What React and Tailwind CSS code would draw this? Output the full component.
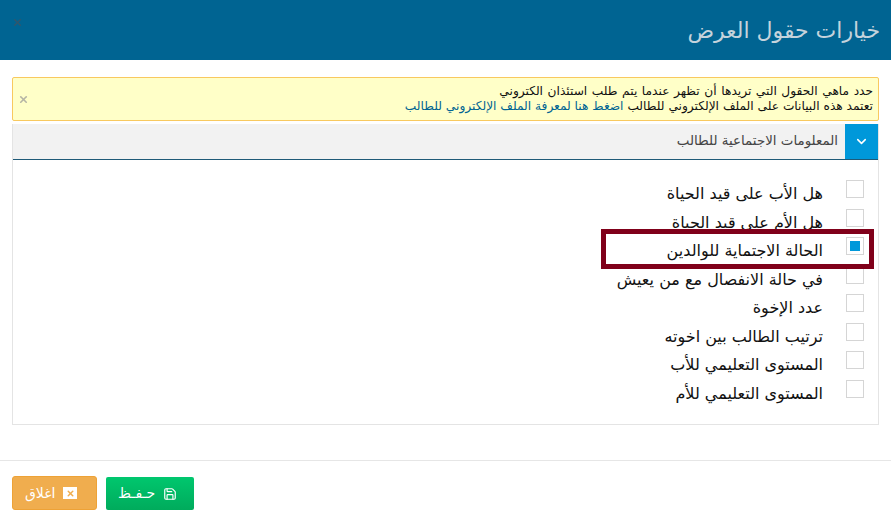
import { ChevronDown, Save, X } from "lucide-react";

const FIELDS = [
  "هل الأب على قيد الحياة",
  "هل الأم على قيد الحياة",
  "الحالة الاجتماية للوالدين",
  "في حالة الانفصال مع من يعيش",
  "عدد الإخوة",
  "ترتيب الطالب بين اخوته",
  "المستوى التعليمي للأب",
  "المستوى التعليمي للأم",
];

function FieldRow({ label, checked }) {
  return (
    <div className="flex h-[28.5px] items-start gap-[23px]">
      <span className="flex h-[18px] w-[18px] shrink-0 items-center justify-center border border-[#d5d5d5] bg-white">
        {checked && <span className="h-[10px] w-[10px] bg-[#0098da]" />}
      </span>
      <span className="pt-[4px] text-[16px] leading-[20px] text-[#111]">{label}</span>
    </div>
  );
}

export default function App() {
  return (
    <div
      dir="rtl"
      className="relative h-[520px] w-[891px] overflow-hidden bg-white font-['DejaVu_Sans','Noto_Sans',sans-serif]"
    >
      <header className="flex h-[60px] items-center justify-between bg-[#006492] pl-[12px] pr-[11px]">
        <h1 className="text-[22px] font-normal text-[#c5d3dc]">خيارات حقول العرض</h1>
        <X size={11} strokeWidth={3} className="mb-[15px] text-[#33566b]" />
      </header>

      <div className="px-[12px] pt-[17px]">
        <div className="flex h-[44px] items-center justify-between rounded-[2px] border border-[#f8c95f] bg-[#ffffc8] pl-[5px] pr-[5px] text-[12.2px] leading-[15px] text-[#111]">
          <div>
            <p className="[word-spacing:0.7px]">حدد ماهي الحقول التي تريدها أن تظهر عندما يتم طلب استئذان الكتروني</p>
            <p>
              تعتمد هذه البيانات على الملف الإلكتروني للطالب{" "}
              <a className="text-[#006492]">اضغط هنا لمعرفة الملف الإلكتروني للطالب</a>
            </p>
          </div>
          <X size={11} strokeWidth={3.5} className="text-[#b5b5a5]" />
        </div>

        <section className="mt-[3px] h-[301px] border-x border-b border-[#e4e4e4]">
          <div className="flex h-[36px] items-stretch border-b border-[#1f5a78] bg-[#f2f2f2]">
            <span className="flex w-[33px] items-center justify-center bg-[#0098da] text-white">
              <ChevronDown size={15} strokeWidth={2.5} />
            </span>
            <span className="flex items-center pr-[7px] text-[13.4px] text-[#444]">
              المعلومات الاجتماعية للطالب
            </span>
          </div>
          <div className="pr-[14px] pt-[20px]">
            {FIELDS.map((label, i) => (
              <FieldRow key={label} label={label} checked={i === 2} />
            ))}
          </div>
        </section>
      </div>

      <footer dir="ltr" className="mt-[35px] flex gap-[9px] border-t border-[#e6e6e6] pl-[12px] pt-[15px]">
        <button className="flex h-[34px] w-[85px] items-center gap-[8px] rounded-[3px] border border-[#eea236] bg-[#f0ad4e] pl-[12px] text-[14px] text-white">
          <span dir="rtl">اغلاق</span>
          <span className="flex h-[12px] w-[14px] items-center justify-center bg-white">
            <X size={9} strokeWidth={4} className="text-[#f0ad4e]" />
          </span>
        </button>
        <button className="mt-[1px] flex h-[33px] w-[88px] items-center gap-[8px] rounded-[2px] bg-gradient-to-b from-[#00c76e] to-[#00ab5c] pl-[12px] text-[14px] text-white">
          <span dir="rtl">حـفـظ</span>
          <Save size={14} />
        </button>
      </footer>

      {/* annotation box drawn over the form */}
      <div className="absolute left-[601px] top-[229px] h-[40px] w-[273px] border-[5px] border-[#80001a]" />
    </div>
  );
}
